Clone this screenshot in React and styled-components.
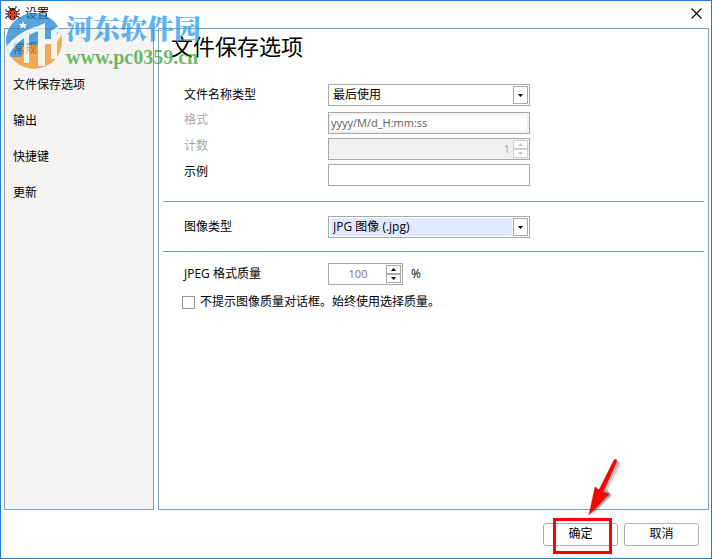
import React, { useState } from 'react';
import styled, { createGlobalStyle } from 'styled-components';

const GlobalStyle = createGlobalStyle`
  * {
    box-sizing: border-box;
  }

  body {
    margin: 0;
    background: #fff;
    color: #000;
    font-family: 'Open Sans', 'Noto Sans CJK SC', sans-serif;
    font-size: 12px;
    line-height: 16px;
  }

  button, input, select {
    font: inherit;
    color: inherit;
  }
`;

const Window = styled.div`
  position: relative;
  display: flex;
  flex-direction: column;
  min-height: 100vh;
  border: 1px solid #1a80d8;
  background: #fff;
`;

const TitleBar = styled.header`
  display: flex;
  align-items: center;
  height: 27px;
  padding: 0 9px 2px 4px;
`;

const Caption = styled.span`
  flex: 1;
  margin-left: 5px;
`;

const CloseButton = styled.button`
  display: flex;
  padding: 0;
  border: none;
  background: none;
`;

const Body = styled.div`
  flex: 1;
  display: flex;
  gap: 4px;
  padding: 0 2px 0 3px;
`;

const Sidebar = styled.nav`
  flex: 0 0 150px;
  display: flex;
  flex-direction: column;
  gap: 20px;
  padding: 12px 8px;
  border: 1px solid #829ebc;
  background: #f5f4f2;
`;

const NavButton = styled.button`
  padding: 0;
  border: none;
  background: none;
  line-height: 16px;
  text-align: left;
`;

const Panel = styled.main`
  flex: 1;
  padding: 0 4px;
  border: 1px solid #829ebc;
`;

const Heading = styled.h1`
  margin: 0;
  padding: 1px 8px 21px;
  font-size: 22px;
  font-weight: 400;
  line-height: 32px;
`;

const Section = styled.section`
  display: flex;
  flex-direction: column;
  gap: 4px;
  padding: ${props => props.$padding};
  border-bottom: ${props => props.$last ? 'none' : '1px solid #829ebc'};
`;

const Row = styled.div`
  display: grid;
  grid-template-columns: 144px 1fr;
  align-items: center;
  margin-bottom: ${props => props.$spaced ? '2px' : '0'};
`;

const Label = styled.label`
  padding-bottom: ${props => props.$raised ? '6px' : '0'};
  color: ${props => props.$muted ? '#a8a8a8' : '#000'};
`;

const Field = styled.div`
  display: flex;
  width: ${props => props.$narrow ? '75px' : '202px'};
  height: 22px;
  padding: 1px;
  border: 1px solid #a9a9a9;
  background: ${props => props.$muted ? '#f0f0f0' : '#fff'};
`;

const Select = styled.select`
  flex: 1;
  min-width: 0;
  margin-right: 1px;
  padding: 0 3px;
  appearance: none;
  border: none;
  border-radius: 2px;
  outline: none;
  background: ${props => props.$active ? '#e0eaff' : '#fff'};
`;

const DropMark = styled.span`
  display: flex;
  align-items: center;
  justify-content: center;
  width: 15px;
  border: 1px solid #a9a9a9;
  background: #fff;
  pointer-events: none;
`;

const TextInput = styled.input`
  flex: 1;
  min-width: 0;
  margin: 1px;
  padding: 0;
  border: none;
  outline: none;
  background: #fff;
  font-size: 11px;

  &:disabled {
    color: #5c5c5c;
  }
`;

const NumberInput = styled.input`
  flex: 1;
  min-width: 0;
  padding: ${props => props.$centered ? '0' : '0 3px'};
  border: none;
  outline: none;
  background: transparent;
  color: ${props => props.$centered ? '#777' : '#a8a8a8'};
  font-size: 11px;
  text-align: ${props => props.$centered ? 'center' : 'right'};
`;

const Spinner = styled.span`
  display: flex;
  flex-direction: column;
  width: 15px;
`;

const SpinButton = styled.button`
  flex: 1;
  display: flex;
  align-items: center;
  justify-content: center;
  min-height: 0;
  padding: 0;
  border: 1px solid ${props => props.disabled ? '#d0d0d0' : '#a9a9a9'};
  background: #fff;
  color: ${props => props.disabled ? '#c0c0c0' : '#000'};
`;

const Inline = styled.div`
  display: flex;
  align-items: center;
  gap: 8px;
`;

const CheckLabel = styled.label`
  display: flex;
  align-items: center;
  gap: 5px;
  margin: 5px 0 0 -2px;
`;

const Checkbox = styled.input`
  width: 13px;
  height: 13px;
  margin: 0;
  appearance: none;
  border: 1px solid #999;
  background: #fff;

  &:checked {
    background: #829ebc;
  }
`;

const Footer = styled.footer`
  display: flex;
  justify-content: flex-end;
  gap: 6px;
  padding: 13px 12px 12px;
`;

const Button = styled.button`
  width: 75px;
  height: 23px;
  padding: 0 0 2px;
  border: 1px solid #adadad;
  border-radius: 3px;
  background: #fff;
`;

const ConfirmSlot = styled.div`
  position: relative;
`;

const Highlight = styled.span`
  position: absolute;
  top: -5px;
  left: 10px;
  width: 59px;
  height: 36px;
  border: 3px solid #fe0000;
  pointer-events: none;
`;

const Arrow = styled.svg`
  position: absolute;
  right: -6px;
  bottom: 28px;
  pointer-events: none;
`;

const Watermark = styled.div`
  position: absolute;
  top: 11px;
  left: 3px;
  display: flex;
  gap: 3px;
  opacity: 0.75;
  pointer-events: none;
`;

const WatermarkText = styled.div`
  display: flex;
  flex-direction: column;
`;

const SiteName = styled.span`
  color: #2b9aed;
  font-family: 'Noto Serif CJK SC', 'Noto Sans CJK SC', serif;
  font-size: 27px;
  font-weight: 900;
  line-height: 32px;
`;

const SiteUrl = styled.span`
  color: #40a434;
  font-family: 'Liberation Serif', serif;
  font-size: 20px;
  font-weight: 700;
  line-height: 26px;
`;

const BugIcon = () => (
  <svg width="15" height="15" viewBox="0 0 15 15" aria-hidden="true">
    <path d="M4 0v2l2 1M11 0v2L9 3M1 3v2l3 1M14 3v2l-3 1M0 8h4M15 8h-4M1 13v-2l3-1M14 13v-2l-3-1" fill="none" stroke="#2a1712" />
    <ellipse cx="7.5" cy="8.5" rx="4.5" ry="5.5" fill="#f03a1c" stroke="#5a1509" strokeWidth="0.7" />
    <path d="M4 4.500Q7.500 -1 11 4.500Z" fill="#2a1712" />
    <path d="M5 6h1v2H5zM9 6h1v2H9zM5 10h1v2H5zM9 10h1v2H9z" fill="#2a0805" />
  </svg>
);

const CloseIcon = () => (
  <svg width="11" height="11" viewBox="0 0 11 11" aria-hidden="true">
    <path d="M.5.5l10 10M10.500.5l-10 10" stroke="#000" strokeWidth="1.1" />
  </svg>
);

const Triangle = ({ up }) => (
  <svg width="5" height="3" viewBox="0 0 5 3" aria-hidden="true">
    <path d={up ? 'M0 3h5L2.500 0z' : 'M0 0h5L2.500 3z'} fill="currentColor" />
  </svg>
);

const SiteLogo = () => (
  <svg width="59" height="58" viewBox="0 0 59 58" aria-hidden="true">
    <defs>
      <clipPath id="logo-disc"><circle cx="30" cy="29" r="28" /></clipPath>
    </defs>
    <g clipPath="url(#logo-disc)">
      <path d="M0 0h59v17L46 29H34v4H18v12H4L0 40z" fill="#2187cf" />
      <path d="M59 17v41H0V45h18V33h23l18-13z" fill="#f09025" />
      <g fill="#fff" opacity="0.9">
        <path d="M0 37C9 26 20 17 35 14v5C24 22 13 29 5 43H0z" />
        <path d="M20 25l5-4v30h-5zM34 14l7-3v43h-7zM41 27h6v5h-6zM47 19l6-4v32h-6z" />
        <path d="M53 15c8 1 5 12-4 18v-4c5-4 7-10 2-10z" />
      </g>
    </g>
    <path d="M19 9l1 3h3l-2 2 1 3-3-2-3 2 1-3-2-2h3z" fill="#fff" />
  </svg>
);

const NAV_ITEMS = ['常规', '文件保存选项', '输出', '快捷键', '更新'];

function Spin({ disabled, onStep }) {
  return (
    <Spinner>
      <SpinButton type="button" aria-label="增加" disabled={disabled} onClick={() => onStep(1)}>
        <Triangle up />
      </SpinButton>
      <SpinButton type="button" aria-label="减少" disabled={disabled} onClick={() => onStep(-1)}>
        <Triangle />
      </SpinButton>
    </Spinner>
  );
}

function App() {
  const [quality, setQuality] = useState(100);
  const [example, setExample] = useState('');
  const [skipDialog, setSkipDialog] = useState(false);

  const changeQuality = (value) => {
    setQuality(Math.max(0, Math.min(100, Number(value) || 0)));
  };

  return (
    <Window>
      <GlobalStyle />
      <TitleBar>
        <BugIcon />
        <Caption>设置</Caption>
        <CloseButton type="button" aria-label="关闭"><CloseIcon /></CloseButton>
      </TitleBar>

      <Body>
        <Sidebar>
          {NAV_ITEMS.map(item => (
            <NavButton key={item} type="button">{item}</NavButton>
          ))}
        </Sidebar>

        <Panel>
          <Heading>文件保存选项</Heading>

          <Section $padding="1px 21px 15px">
            <Row $spaced>
              <Label htmlFor="name-type">文件名称类型</Label>
              <Field>
                <Select id="name-type"><option>最后使用</option></Select>
                <DropMark><Triangle /></DropMark>
              </Field>
            </Row>
            <Row>
              <Label htmlFor="format" $muted $raised>格式</Label>
              <Field $muted>
                <TextInput id="format" defaultValue="yyyy/M/d_H:mm:ss" disabled />
              </Field>
            </Row>
            <Row>
              <Label htmlFor="count" $muted $raised>计数</Label>
              <Field $muted>
                <NumberInput id="count" defaultValue="1" disabled />
                <Spin disabled />
              </Field>
            </Row>
            <Row>
              <Label htmlFor="example" $raised>示例</Label>
              <Field>
                <TextInput id="example" value={example} onChange={(e) => setExample(e.target.value)} />
              </Field>
            </Row>
          </Section>

          <Section $padding="14px 21px 13px">
            <Row>
              <Label htmlFor="image-type">图像类型</Label>
              <Field>
                <Select id="image-type" $active><option>JPG 图像 (.jpg)</option></Select>
                <DropMark><Triangle /></DropMark>
              </Field>
            </Row>
          </Section>

          <Section $padding="11px 21px" $last>
            <Row>
              <Label htmlFor="quality">JPEG 格式质量</Label>
              <Inline>
                <Field $narrow>
                  <NumberInput
                    id="quality"
                    $centered
                    value={quality}
                    onChange={(e) => changeQuality(e.target.value)}
                  />
                  <Spin onStep={(step) => changeQuality(quality + step)} />
                </Field>
                <span>%</span>
              </Inline>
            </Row>
            <CheckLabel>
              <Checkbox
                type="checkbox"
                checked={skipDialog}
                onChange={(e) => setSkipDialog(e.target.checked)}
              />
              不提示图像质量对话框。始终使用选择质量。
            </CheckLabel>
          </Section>
        </Panel>
      </Body>

      <Footer>
        <ConfirmSlot>
          <Button type="button">确定</Button>
          <Highlight />
          <Arrow width="40" height="60" viewBox="0 0 40 60" aria-hidden="true">
            <path d="M37 6L24 32l4 6L9 57l5-25 6 2L34 4z" fill="#555" opacity="0.25" />
            <path d="M35 4L22 31l5 6L8 56l5-25 6 2L33 3z" fill="#555" opacity="0.4" />
            <path d="M30 2q2-2 3 1L19 34l6 2L5 57l6-28 4 3z" fill="#fe0000" stroke="#a00" strokeWidth="0.4" />
          </Arrow>
        </ConfirmSlot>
        <Button type="button">取消</Button>
      </Footer>

      <Watermark>
        <SiteLogo />
        <WatermarkText>
          <SiteName>河东软件园</SiteName>
          <SiteUrl>www.pc0359.cn</SiteUrl>
        </WatermarkText>
      </Watermark>
    </Window>
  );
}

export default App;
